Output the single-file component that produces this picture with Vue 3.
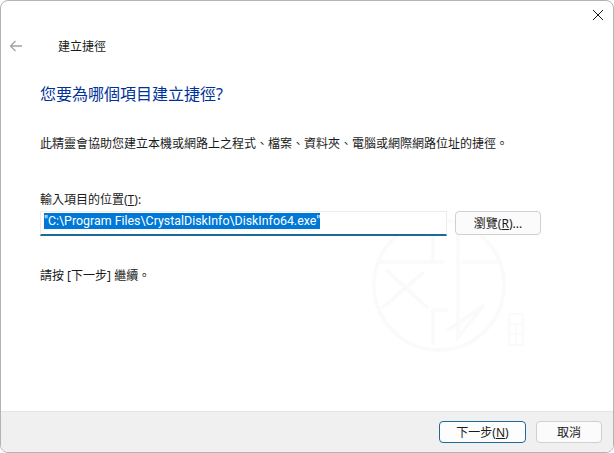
<script setup>
const path = '"C:\\Program Files\\CrystalDiskInfo\\DiskInfo64.exe"'
</script>

<template>
  <div class="window">
    <header class="titlebar">
      <button class="close" aria-label="關閉">
        <svg width="12" height="12" viewBox="0 0 12 12"><path d="M1 1l10 10M11 1L1 11" stroke="#1a1a1a" fill="none" stroke-width="1" /></svg>
      </button>
      <div class="nav">
        <svg class="back" width="14" height="12" viewBox="0 0 14 12"><path d="M13 6H1.5M6.5 1L1.5 6l5 5" stroke="#a3a3a3" fill="none" stroke-width="1.3" /></svg>
        <span class="title">建立捷徑</span>
      </div>
    </header>

    <main class="body">
      <!-- 浮水印 -->
      <svg class="seal" width="160" height="140" viewBox="0 0 160 140" fill="none" stroke="#fafafa" stroke-width="3.5">
        <circle cx="67" cy="67" r="65" />
        <path d="M5 44H72M89 44H130M61 18V44M86 12V119L112 87M75 113L112 87M14 52L56 90M52 54L10 90M61 92V127M61 92H76" />
        <rect x="137" y="96" width="14" height="31" stroke-width="2" />
        <path d="M137 106H151M137 116H151M144 106V127" stroke-width="1.5" />
      </svg>

      <h1 class="heading">您要為哪個項目建立捷徑?</h1>
      <p class="desc">此精靈會協助您建立本機或網路上之程式、檔案、資料夾、電腦或網際網路位址的捷徑。</p>

      <label class="label">輸入項目的位置(<u>T</u>):</label>
      <div class="row">
        <div class="input"><span class="selected">{{ path }}</span></div>
        <button class="btn browse">瀏覽(<u>R</u>)...</button>
      </div>

      <p class="hint">請按 [下一步] 繼續。</p>
    </main>

    <footer class="footer">
      <button class="btn primary">下一步(<u>N</u>)</button>
      <button class="btn cancel">取消</button>
    </footer>
  </div>
</template>

<style>
html, body {
  margin: 0;
  background: #fff;
}
</style>

<style scoped>
.window {
  width: 614px;
  height: 453px;
  box-sizing: border-box;
  display: flex;
  flex-direction: column;
  background: #fff;
  border: 1px solid #b4b4b4;
  border-radius: 8px;
  overflow: hidden;
  font-family: "Noto Sans", "Noto Sans CJK TC", sans-serif;
  font-size: 12px;
  color: #1a1a1a;
}

.titlebar {
  height: 56px;
  padding: 8px 9px 0 8px;
  box-sizing: border-box;
}

.close {
  display: block;
  margin-left: auto;
  padding: 0;
  width: 12px;
  height: 12px;
  border: 0;
  background: none;
  line-height: 0;
}

.nav {
  display: flex;
  align-items: center;
  margin-top: 13px;
  height: 24px;
}

.back {
  flex: none;
}

.title {
  margin-left: 35px;
}

.body {
  position: relative;
  flex: 1;
  padding: 0 39px;
}

.heading {
  margin: 25px 0 0;
  font-size: 16px;
  font-weight: 400;
  line-height: 24px;
  color: #003399;
}

.desc {
  margin: 29px 0 0;
  line-height: 18px;
}

.label {
  display: block;
  margin-top: 38px;
  line-height: 18px;
}

.row {
  position: relative;
  z-index: 1;
  display: flex;
  gap: 8px;
  margin-top: 2px;
}

.input {
  width: 407px;
  height: 25px;
  box-sizing: border-box;
  border: 1px solid #ececec;
  border-bottom: 2px solid #1c6a97;
  padding: 1px 0 0 3px;
  line-height: 16px;
  background: #fff;
  font-family: Roboto, sans-serif;
  font-size: 12.4px;
}

.selected {
  display: inline-block;
  background: #0078d7;
  color: #fff;
  height: 16px;
  line-height: 16px;
}

.btn {
  box-sizing: border-box;
  padding: 0;
  border: 1px solid #d0d0d0;
  border-radius: 4px;
  background: #fbfbfb;
  font: inherit;
  color: #1a1a1a;
}

.browse {
  width: 86px;
  height: 24px;
}

.hint {
  position: relative;
  margin: 31px 0 0;
  line-height: 18px;
}

.seal {
  position: absolute;
  left: 371px;
  top: 161px;
}

.footer {
  height: 41px;
  flex: none;
  box-sizing: border-box;
  display: flex;
  justify-content: flex-end;
  align-items: center;
  gap: 10px;
  padding: 0 11px 1px 0;
  background: #f0f0f0;
  border-top: 1px solid #e5e5e5;
}

.primary {
  width: 87px;
  height: 22px;
  border: 1px solid #1c6a97;
  background: #fdfdfd;
}

.cancel {
  width: 66px;
  height: 22px;
}
</style>
